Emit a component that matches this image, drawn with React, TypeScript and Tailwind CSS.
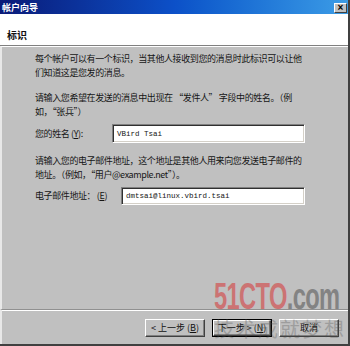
const cjk = "font-['SimSun','Noto_Sans_CJK_SC',sans-serif]";

const Btn = ({ children, primary }: { children: React.ReactNode; primary?: boolean }) => (
  <div className={`w-[60px] h-[18px] ${primary ? 'border border-black' : ''}`}>
    <div className="w-full h-full flex items-center justify-center bg-[#c0c0c0] border-t border-l border-white border-r border-b border-r-[#404040] border-b-[#404040] shadow-[inset_-1px_-1px_0_#808080] text-[9px] text-[#111]">
      {children}
    </div>
  </div>
);

export default function App() {
  return (
    <div className={`relative w-[350px] h-[346px] flex flex-col bg-[#c0c0c0] border-r-2 border-b-2 border-r-[#404040] border-b-[#404040] ${cjk} overflow-hidden`}>
      {/* title bar */}
      <div className="h-[14px] flex items-center justify-between bg-gradient-to-r from-[#0a1a78] via-[#0c50c8] to-[#3c9ce6] pl-[2px] pr-[1px]">
        <span className="text-[9px] font-bold text-white leading-none">帐户向导</span>
        <div className="w-[13px] h-[10px] mt-[2px] flex items-center justify-center bg-[#c0c0c0] border-t border-l border-white border-r border-b border-r-[#404040] border-b-[#404040] text-[10px] font-bold leading-none text-black font-['Liberation_Sans',sans-serif]">
          ×
        </div>
      </div>

      {/* header */}
      <div className="h-[32px] bg-white border-b border-[#808080] pl-[7px] pt-[6px]">
        <span className="text-[10px] font-bold text-[#111]">标识</span>
      </div>

      {/* body */}
      <div className="flex-1 flex flex-col border-l-2 border-l-[#e8e8e8] border-t border-t-white pl-[33px] text-[9px] leading-[14px] text-[#151515] tracking-[-0.4px]">
        <div className="w-[270px] mt-[5px]">
          每个帐户可以有一个标识，当其他人接收到您的消息时此标识可以让他们知道这是您发的消息。
        </div>
        <div className="w-[270px] mt-[11px]">
          请输入您希望在发送的消息中出现在 “发件人” 字段中的姓名。（例如，“张兵”）
        </div>
        <div className="w-[270px] mt-[5px] flex items-center">
          <span className="w-[77px]">您的姓名 (<u>Y</u>):</span>
          <div className="flex-1 h-[19px] bg-white border border-t-[#808080] border-l-[#808080] border-r-white border-b-white shadow-[inset_1px_1px_0_#303030,inset_-1px_-1px_0_#d4d0c8] pl-[4px] flex items-center font-['Liberation_Mono',monospace] text-[7.5px] tracking-normal">
            VBird Tsai
          </div>
        </div>
        <div className="w-[270px] mt-[11px]">
          请输入您的电子邮件地址，这个地址是其他人用来向您发送电子邮件的地址。（例如，“用户@example.net”）。
        </div>
        <div className="w-[270px] mt-[5px] flex items-center">
          <span className="w-[86px]">电子邮件地址： (<u>E</u>)</span>
          <div className="flex-1 h-[18px] bg-white border border-t-[#808080] border-l-[#808080] border-r-white border-b-white shadow-[inset_1px_1px_0_#303030,inset_-1px_-1px_0_#d4d0c8] pl-[4px] flex items-center font-['Liberation_Mono',monospace] text-[7.5px] tracking-normal">
            dmtsai@linux.vbird.tsai
          </div>
        </div>
        <div className="flex-1" />
      </div>

      {/* footer */}
      <div className="h-[35px] border-t border-t-[#909090] border-l-2 border-l-[#e8e8e8]">
        <div className="border-t border-white h-full flex justify-end gap-[7px] pr-[9px] pt-[8px]">
          <Btn>&lt; 上一步 (<u>B</u>)</Btn>
          <Btn primary>下一步 &gt; (<u>N</u>)</Btn>
          <Btn>取消</Btn>
        </div>
      </div>

      {/* watermark */}
      <div className="absolute left-[214px] top-[278px] origin-left [transform:scaleX(0.64)] flex items-baseline font-['Liberation_Sans',sans-serif] font-bold text-[37px] leading-none tracking-[-1px] pointer-events-none whitespace-nowrap">
        <span className="text-[#d05a5a] opacity-75">51CTO</span>
        <span className="text-[#6a6a6a] opacity-70">.com</span>
      </div>
      <div className={`absolute left-[214px] top-[319px] text-[20px] leading-none tracking-[2px] text-[#505050] opacity-30 pointer-events-none ${cjk}`}>
        技术成就梦想
      </div>
    </div>
  );
}
